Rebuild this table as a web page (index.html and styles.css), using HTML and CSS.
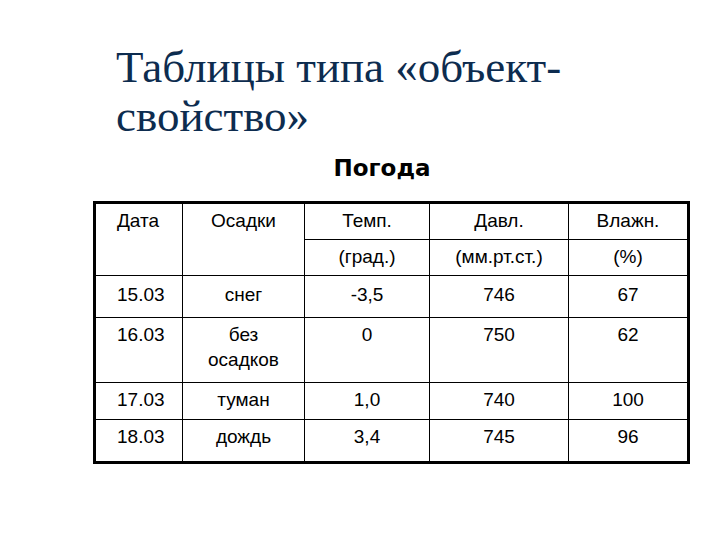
FILE: index.html
```html
<!DOCTYPE html>
<html lang="ru">
<head>
<meta charset="utf-8">
<link rel="stylesheet" href="styles.css">
</head>
<body>
<div class="slide">
  <h1 class="title">Таблицы типа «объект-<br>свойство»</h1>
  <div class="block">
    <div class="caption">Погода</div>
    <table class="weather">
      <colgroup>
        <col class="c1"><col class="c2"><col class="c3"><col class="c4"><col class="c5">
      </colgroup>
      <tr class="h1">
        <td rowspan="2" class="left">Дата</td>
        <td rowspan="2">Осадки</td>
        <td>Темп.</td>
        <td>Давл.</td>
        <td>Влажн.</td>
      </tr>
      <tr class="h2">
        <td>(град.)</td>
        <td>(мм.рт.ст.)</td>
        <td>(%)</td>
      </tr>
      <tr class="r1">
        <td class="left">15.03</td><td>снег</td><td>-3,5</td><td>746</td><td>67</td>
      </tr>
      <tr class="r2">
        <td class="left">16.03</td><td>без<br>осадков</td><td>0</td><td>750</td><td>62</td>
      </tr>
      <tr class="r3">
        <td class="left">17.03</td><td>туман</td><td>1,0</td><td>740</td><td>100</td>
      </tr>
      <tr class="r4">
        <td class="left">18.03</td><td>дождь</td><td>3,4</td><td>745</td><td>96</td>
      </tr>
    </table>
  </div>
</div>
</body>
</html>
```
FILE: styles.css
```css
html, body {
  margin: 0;
  padding: 0;
  background: #ffffff;
}
.slide {
  width: 720px;
  height: 540px;
  overflow: hidden;
  position: relative;
}
.title {
  margin: 43px 0 0 116px;
  font-family: "Liberation Serif", "Times New Roman", serif;
  font-weight: normal;
  font-size: 45px;
  line-height: 49px;
  color: #0d2c4f;
}
.block {
  margin-left: 93px;
  width: 594px;
}
.caption {
  font-family: "DejaVu Sans", Verdana, sans-serif;
  font-weight: bold;
  font-size: 23px;
  line-height: 26px;
  text-align: center;
  padding-right: 16px;
  margin-top: 14px;
  height: 46px;
  color: #000;
}
.weather {
  border-collapse: collapse;
  border: 3px solid #000;
  width: 594px;
  table-layout: fixed;
  font-family: "Liberation Sans", Arial, sans-serif;
  font-size: 19px;
  line-height: 25px;
  color: #000;
}
.c1 { width: 88px; }
.c2 { width: 122px; }
.c3 { width: 125px; }
.c4 { width: 139px; }
.c5 { width: 120px; }
.weather td {
  border: 1px solid #000;
  padding: 4px 4px 0;
  vertical-align: top;
  text-align: center;
}
.weather td.left {
  text-align: left;
  padding-left: 21px;
}
.weather .r1 td { padding-top: 6px; }
.h1 { height: 37px; }
.h2 { height: 36px; }
.r1 { height: 42px; }
.r2 { height: 65px; }
.r3 { height: 37px; }
.r4 { height: 43px; }
```
